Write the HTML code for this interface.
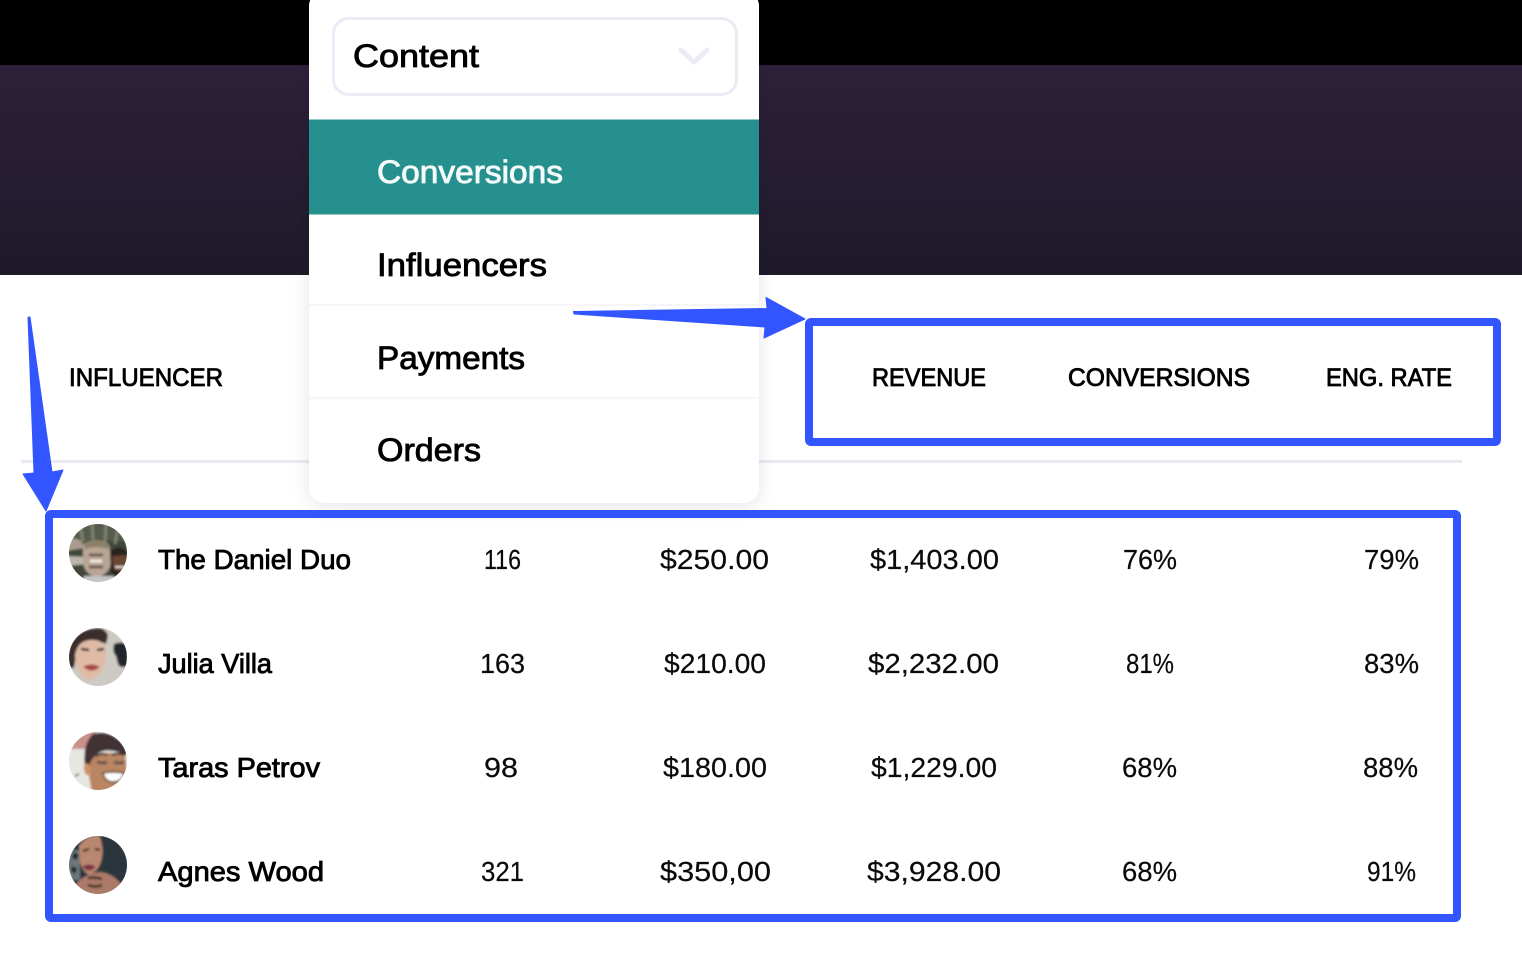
<!DOCTYPE html>
<html lang="en">
<head>
<meta charset="utf-8">
<title>Influencer table</title>
<style>
html,body{margin:0;padding:0;background:#fff;width:1522px;height:976px;overflow:hidden}
svg{display:block}
text{font-family:"Liberation Sans",Arial,sans-serif;fill:#000}
.m{stroke:#000;stroke-width:.85px}
.menu{font-size:32px}
.h{font-size:25px}
.n{font-size:28px}
.v{font-size:28px;fill:#0a0a0a;stroke:#0a0a0a;stroke-width:.2px}
</style>
</head>
<body>
<svg width="1522" height="976" viewBox="0 0 1522 976" xmlns="http://www.w3.org/2000/svg">
<defs>
<linearGradient id="hero" x1="0" y1="0" x2="0" y2="1"><stop offset="0" stop-color="#2e203a"/><stop offset="1" stop-color="#1e1a2a"/></linearGradient>
<filter id="sh" x="-10%" y="-10%" width="120%" height="120%"><feDropShadow dx="0" dy="3" stdDeviation="9" flood-color="#20143a" flood-opacity=".10"/></filter>
<filter id="b1" x="-20%" y="-20%" width="140%" height="140%"><feGaussianBlur stdDeviation="1"/></filter>
<clipPath id="c1"><circle cx="98" cy="553" r="29"/></clipPath>
<clipPath id="c2"><circle cx="98" cy="657" r="29"/></clipPath>
<clipPath id="c3"><circle cx="98" cy="761" r="29"/></clipPath>
<clipPath id="c4"><circle cx="98" cy="865" r="29"/></clipPath>
<clipPath id="menuclip"><rect x="309" y="-10" width="450" height="513" rx="16"/></clipPath>
</defs>

<rect width="1522" height="976" fill="#fff"/>
<rect width="1522" height="65" fill="#000"/>
<rect y="65" width="1522" height="210" fill="url(#hero)"/>

<!-- table divider -->
<rect x="21" y="460" width="1441" height="3" fill="#e9e9f4"/>

<!-- headers -->
<text x="69" y="386" class="h m" textLength="154" lengthAdjust="spacingAndGlyphs">INFLUENCER</text>
<text x="872" y="386" class="h m" textLength="114" lengthAdjust="spacingAndGlyphs">REVENUE</text>
<text x="1068" y="386" class="h m" textLength="182" lengthAdjust="spacingAndGlyphs">CONVERSIONS</text>
<text x="1326" y="386" class="h m" textLength="126" lengthAdjust="spacingAndGlyphs">ENG. RATE</text>

<!-- dropdown -->
<rect x="309" y="-10" width="450" height="513" rx="16" fill="#fff" filter="url(#sh)"/>
<g clip-path="url(#menuclip)">
<rect x="309" y="119.500" width="450" height="95" fill="#26908f"/>
<rect x="309" y="304" width="450" height="2" fill="#f6f6f9"/>
<rect x="309" y="397" width="450" height="2" fill="#f6f6f9"/>
</g>
<rect x="333.500" y="18.500" width="403" height="76" rx="15" fill="#fff" stroke="#ebebf5" stroke-width="3"/>
<path d="M681 50 L694 62 L707 50" fill="none" stroke="#ebebf5" stroke-width="5" stroke-linecap="round" stroke-linejoin="round"/>
<text x="353" y="67" class="menu m" textLength="126" lengthAdjust="spacingAndGlyphs">Content</text>
<text x="377" y="183" class="menu" style="fill:#f4fbfa;stroke:#f4fbfa;stroke-width:.85px" textLength="186" lengthAdjust="spacingAndGlyphs">Conversions</text>
<text x="377" y="276" class="menu m" textLength="170" lengthAdjust="spacingAndGlyphs">Influencers</text>
<text x="377" y="369" class="menu m" textLength="148" lengthAdjust="spacingAndGlyphs">Payments</text>
<text x="377" y="461" class="menu m" textLength="104" lengthAdjust="spacingAndGlyphs">Orders</text>

<!-- avatar 1 -->
<g clip-path="url(#c1)"><g filter="url(#b1)">
<rect x="66" y="521" width="64" height="64" fill="#40463a"/>
<path d="M66 521h64v20H66z" fill="#565b4b"/>
<path d="M80 524l3 18M92 522l1 18M106 522l-1 20M118 528l-3 16" stroke="#7d8270" stroke-width="3"/>
<path d="M66 536l14 4 5 8-19 3z" fill="#a89c90"/>
<path d="M68 556l18 1 1 7-19 2z" fill="#bdb6aa"/>
<path d="M83 544q14-7 26 0l2 16q0 14-14 17-12-2-14-14z" fill="#b9a594"/>
<path d="M84 544q13-6 25 0l-1 5q-11-4-23 0z" fill="#8a8066"/>
<path d="M89 555h14M89 567h14" stroke="#5b4d45" stroke-width="2.500"/>
<path d="M90 561h12" stroke="#eee8e0" stroke-width="3"/>
<path d="M84 576h30v10H84z" fill="#c4c4c8"/>
<path d="M110 552q8-9 17 0v18q-9 9-16 3z" fill="#2b211e"/>
<path d="M112 556l15-1v13q-7 6-13 1z" fill="#694432"/>
<path d="M115 567h9" stroke="#e5dcd2" stroke-width="2"/>
</g></g>

<!-- avatar 2 -->
<g clip-path="url(#c2)"><g filter="url(#b1)">
<rect x="66" y="625" width="64" height="64" fill="#cdcac3"/>
<path d="M114 644q6-3 14 0v22q-8 3-10-2l-2-8q-4-4-2-12z" fill="#22282b"/>
<path d="M67 668q-2-38 30-40 9 0 11 8l-2 8q-14-6-24 2l-6 10-2 12z" fill="#3a2f2b"/>
<path d="M75 655q3-16 18-15 13 0 13 14 0 16-12 24-7 4-13-3-6-9-6-20z" fill="#dfbba6"/>
<path d="M81 649l8 1M97 650l7-1" stroke="#33261f" stroke-width="2.500"/>
<path d="M85 667q6-3 13 0-6 5-13 0z" fill="#a8473f" stroke="#a8473f" stroke-width="2"/>
<path d="M70 668q6 12 18 20l-18 4z" fill="#efdfd4"/>
</g></g>

<!-- avatar 3 -->
<g clip-path="url(#c3)"><g filter="url(#b1)">
<rect x="66" y="729" width="64" height="64" fill="#e6e7e1"/>
<rect x="66" y="729" width="30" height="20" fill="#c8918c"/>
<path d="M85 768q-3-24 8-34 18-6 34 14l2 8q-22-10-32-2l-6 14z" fill="#3f3135"/>
<path d="M89 776q-1-14 6-20 10-6 30-1l3 22-12 16H92z" fill="#b98562"/>
<path d="M84 764q4-2 6 2l1 10q-6 0-7-6z" fill="#cf9168"/>
<path d="M96 756q6-4 11-1M112 755q6-3 13 0" stroke="#2d221e" stroke-width="2" fill="none"/>
<path d="M97 762q6 2 10 0M114 762q5 2 10 0" stroke="#6a524d" stroke-width="3" fill="none"/>
<path d="M103 773q10-2 21 0-2 9-11 9-8 0-10-9z" fill="#fff" stroke="#4a241d" stroke-width="1.500"/>
<path d="M79 774l-4 2" stroke="#333" stroke-width="1.500"/>
</g></g>

<!-- avatar 4 -->
<g clip-path="url(#c4)"><g filter="url(#b1)">
<rect x="66" y="833" width="64" height="64" fill="#2a343c"/>
<path d="M66 850h14v30H66z" fill="#6c777c"/>
<path d="M74 852l5 3-3 5-4-2zM72 866l5 2-2 6-4-3z" fill="#242a30"/>
<path d="M79 846q6-10 20-11 5 12 3 22-2 14-13 18-7-4-9-13z" fill="#b98770"/>
<path d="M83 851l6-2M95 849l5 1" stroke="#2a1e1c" stroke-width="2"/>
<path d="M84 867q5-3 10 0-5 5-10 0z" fill="#7d3144" stroke="#7d3144" stroke-width="2"/>
<path d="M76 884q8-10 24-12 14 1 24 16l-6 9H78z" fill="#ab7a68"/>
<path d="M88 878q8-1 14 1M88 885q8 3 14 0" stroke="#3a2623" stroke-width="2.500" fill="none"/>
</g></g>

<!-- rows -->
<text x="158" y="569" class="n m" textLength="193" lengthAdjust="spacingAndGlyphs">The Daniel Duo</text>
<text x="484" y="569" class="v" textLength="37" lengthAdjust="spacingAndGlyphs">116</text>
<text x="660" y="569" class="v" textLength="109" lengthAdjust="spacingAndGlyphs">$250.00</text>
<text x="870" y="569" class="v" textLength="129" lengthAdjust="spacingAndGlyphs">$1,403.00</text>
<text x="1123" y="569" class="v" textLength="54" lengthAdjust="spacingAndGlyphs">76%</text>
<text x="1364" y="569" class="v" textLength="55" lengthAdjust="spacingAndGlyphs">79%</text>

<text x="158" y="673" class="n m" textLength="114" lengthAdjust="spacingAndGlyphs">Julia Villa</text>
<text x="480" y="673" class="v" textLength="45" lengthAdjust="spacingAndGlyphs">163</text>
<text x="664" y="673" class="v" textLength="102" lengthAdjust="spacingAndGlyphs">$210.00</text>
<text x="868" y="673" class="v" textLength="131" lengthAdjust="spacingAndGlyphs">$2,232.00</text>
<text x="1126" y="673" class="v" textLength="48" lengthAdjust="spacingAndGlyphs">81%</text>
<text x="1364" y="673" class="v" textLength="55" lengthAdjust="spacingAndGlyphs">83%</text>

<text x="158" y="777" class="n m" textLength="162" lengthAdjust="spacingAndGlyphs">Taras Petrov</text>
<text x="484" y="777" class="v" textLength="34" lengthAdjust="spacingAndGlyphs">98</text>
<text x="663" y="777" class="v" textLength="104" lengthAdjust="spacingAndGlyphs">$180.00</text>
<text x="871" y="777" class="v" textLength="126" lengthAdjust="spacingAndGlyphs">$1,229.00</text>
<text x="1122" y="777" class="v" textLength="55" lengthAdjust="spacingAndGlyphs">68%</text>
<text x="1363" y="777" class="v" textLength="55" lengthAdjust="spacingAndGlyphs">88%</text>

<text x="158" y="881" class="n m" textLength="166" lengthAdjust="spacingAndGlyphs">Agnes Wood</text>
<text x="481" y="881" class="v" textLength="43" lengthAdjust="spacingAndGlyphs">321</text>
<text x="660" y="881" class="v" textLength="111" lengthAdjust="spacingAndGlyphs">$350,00</text>
<text x="867" y="881" class="v" textLength="134" lengthAdjust="spacingAndGlyphs">$3,928.00</text>
<text x="1122" y="881" class="v" textLength="55" lengthAdjust="spacingAndGlyphs">68%</text>
<text x="1367" y="881" class="v" textLength="49" lengthAdjust="spacingAndGlyphs">91%</text>

<!-- annotations -->
<rect x="809" y="322" width="688" height="120" rx="2" fill="none" stroke="#3355ff" stroke-width="8"/>
<rect x="49" y="514" width="1408" height="404" rx="2" fill="none" stroke="#3355ff" stroke-width="8"/>
<path d="M573.500 311.500 L767 308.500 L766 297.500 L805 319 L764 338 L765 327 L574 314 Z" fill="#3355ff" stroke="#3355ff" stroke-width="1" stroke-linejoin="round"/>
<path d="M28.500 317 L30 317 L52 472 L63 470 L46 511 L23 474 L34 473 L28 318 Z" fill="#3355ff" stroke="#3355ff" stroke-width="1" stroke-linejoin="round"/>
</svg>
</body>
</html>
